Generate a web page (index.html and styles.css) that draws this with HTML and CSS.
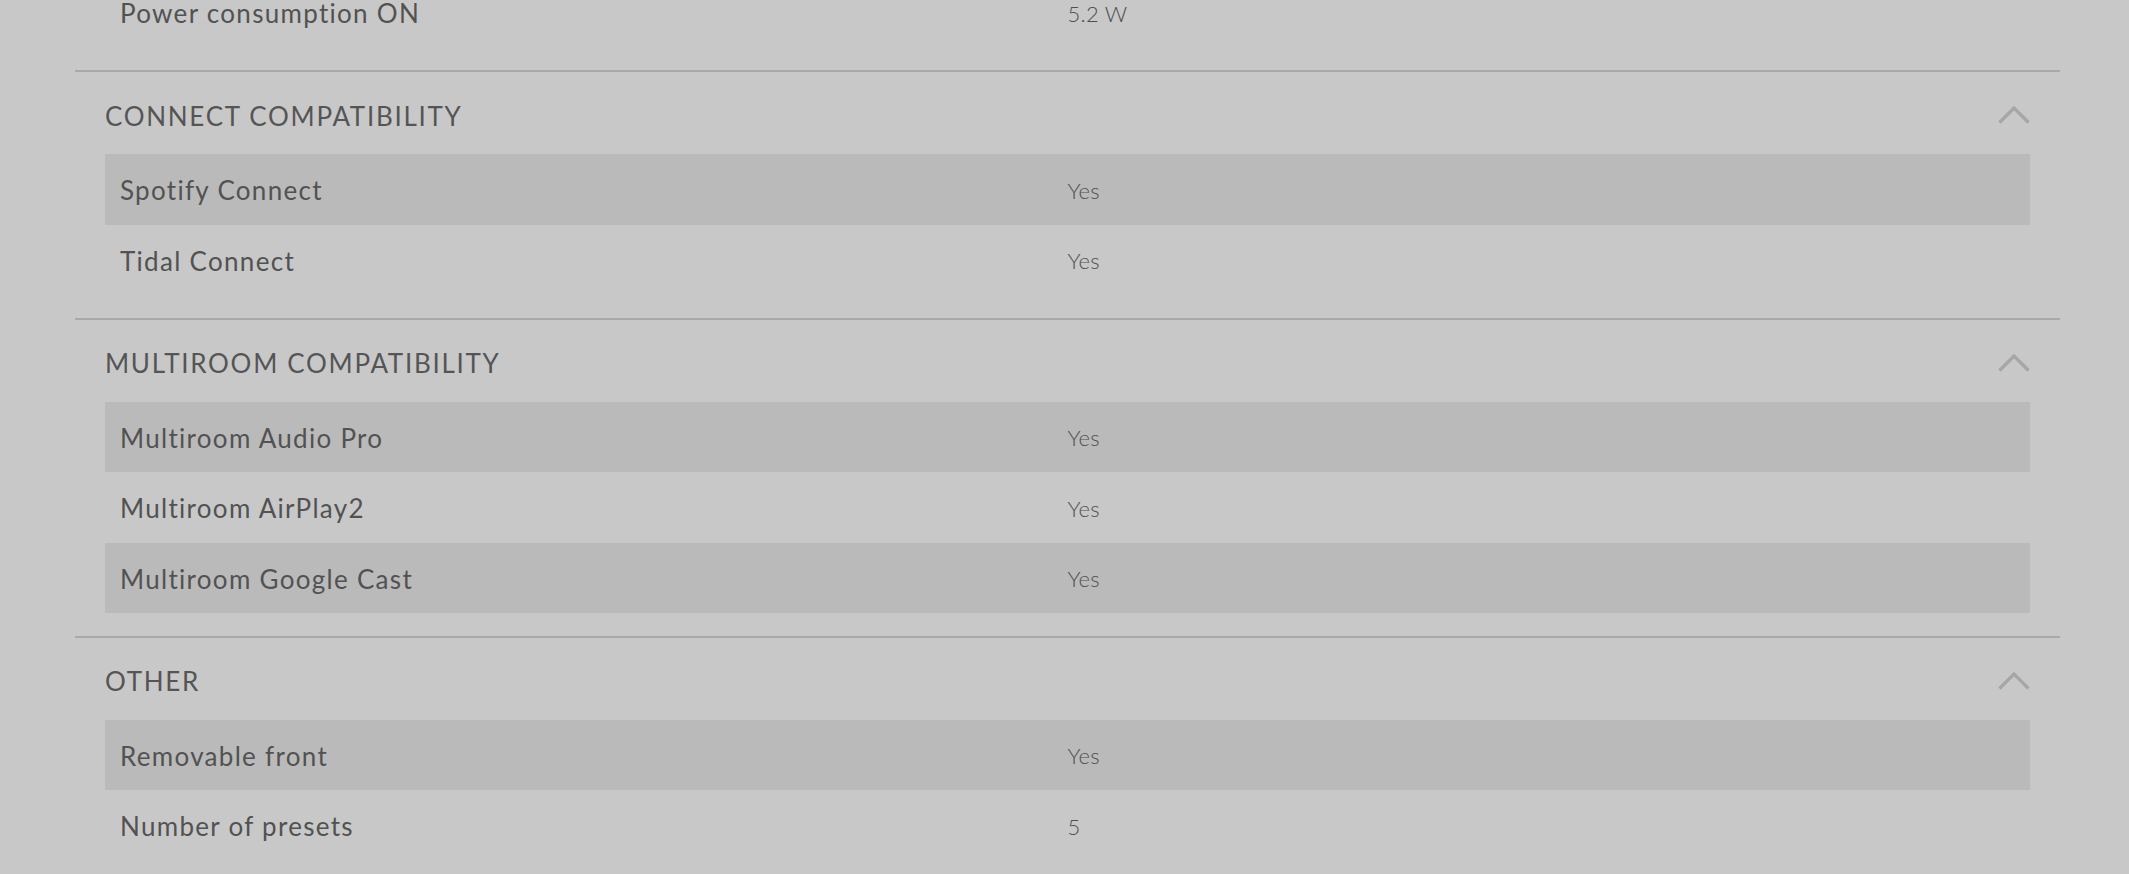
FILE: index.html
```html
<!DOCTYPE html>
<html lang="en">
<head>
<meta charset="utf-8">
<title>Specifications</title>
<link rel="stylesheet" href="styles.css">
</head>
<body>
<div class="page">
  <section class="spec-section spec-section--tail">
    <div class="spec-row">
      <div class="spec-label">Power consumption ON</div>
      <div class="spec-value">5.2 W</div>
    </div>
  </section>

  <section class="spec-section">
    <div class="spec-head">
      <h2 class="spec-title">CONNECT COMPATIBILITY</h2>
      <svg class="chevron" viewBox="0 0 34 20" width="34" height="20" aria-hidden="true"><polyline points="2.5,17.5 17,3 31.5,17.5"/></svg>
    </div>
    <div class="spec-row spec-row--striped">
      <div class="spec-label">Spotify Connect</div>
      <div class="spec-value">Yes</div>
    </div>
    <div class="spec-row">
      <div class="spec-label">Tidal Connect</div>
      <div class="spec-value">Yes</div>
    </div>
  </section>

  <section class="spec-section">
    <div class="spec-head">
      <h2 class="spec-title">MULTIROOM COMPATIBILITY</h2>
      <svg class="chevron" viewBox="0 0 34 20" width="34" height="20" aria-hidden="true"><polyline points="2.5,17.5 17,3 31.5,17.5"/></svg>
    </div>
    <div class="spec-row spec-row--striped">
      <div class="spec-label">Multiroom Audio Pro</div>
      <div class="spec-value">Yes</div>
    </div>
    <div class="spec-row">
      <div class="spec-label">Multiroom AirPlay2</div>
      <div class="spec-value">Yes</div>
    </div>
    <div class="spec-row spec-row--striped">
      <div class="spec-label">Multiroom Google Cast</div>
      <div class="spec-value">Yes</div>
    </div>
  </section>

  <section class="spec-section">
    <div class="spec-head">
      <h2 class="spec-title">OTHER</h2>
      <svg class="chevron" viewBox="0 0 34 20" width="34" height="20" aria-hidden="true"><polyline points="2.5,17.5 17,3 31.5,17.5"/></svg>
    </div>
    <div class="spec-row spec-row--striped">
      <div class="spec-label">Removable front</div>
      <div class="spec-value">Yes</div>
    </div>
    <div class="spec-row">
      <div class="spec-label">Number of presets</div>
      <div class="spec-value">5</div>
    </div>
  </section>
</div>
</body>
</html>
```

FILE: styles.css
```css
html, body {
  margin: 0;
  padding: 0;
}

body {
  background: #c8c8c8;
  color: #555555;
  font-family: Lato, "Open Sans", sans-serif;
  overflow: hidden;
}

.page {
  margin-top: -23px;
  margin-left: 75px;
  width: 1985px;
}

.spec-section {
  border-top: 2px solid #a9a9a9;
  padding: 0 30px 22.5px;
}

.spec-section--tail {
  border-top: none;
}

.spec-head {
  display: flex;
  align-items: center;
  justify-content: space-between;
  height: 82px;
}

.spec-title {
  margin: 0;
  font-size: 26px;
  font-weight: 400;
  letter-spacing: 1.7px;
  line-height: 31px;
  color: #555555;
  position: relative;
  top: 3px;
}

.chevron {
  display: block;
  margin-right: -1px;
  position: relative;
  top: 2px;
}

.chevron polyline {
  fill: none;
  stroke: #a6a6a6;
  stroke-width: 3.2;
  stroke-linecap: butt;
  stroke-linejoin: miter;
}

.spec-row {
  display: grid;
  grid-template-columns: 1fr 1fr;
  align-items: center;
  height: 70.5px;
  box-sizing: border-box;
  padding-top: 2px;
}

.spec-row--striped {
  background: #bababa;
}

.spec-label {
  padding-left: 15px;
  font-size: 26px;
  font-weight: 400;
  letter-spacing: 1.3px;
  color: #525252;
}

.spec-value {
  font-size: 22px;
  font-weight: 300;
  letter-spacing: 0.3px;
  color: #505050;
}
```
